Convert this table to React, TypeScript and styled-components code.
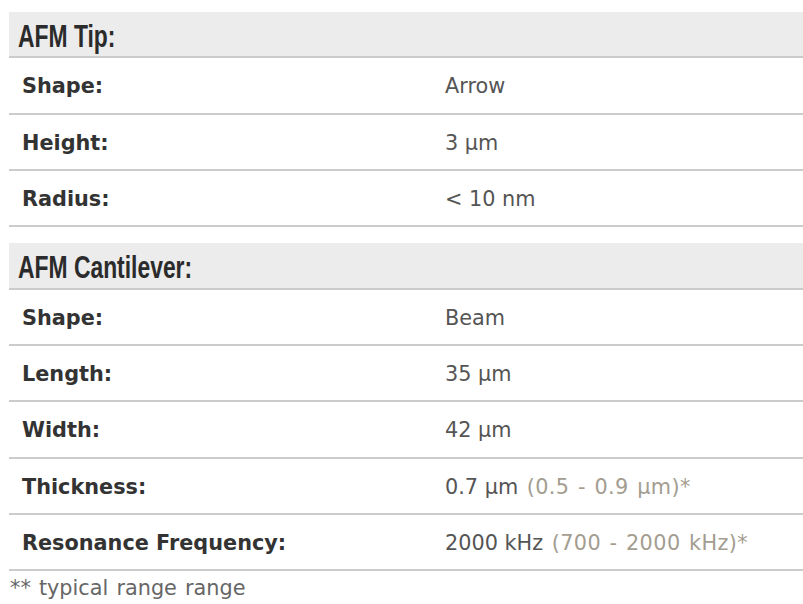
import React from "react";
import styled, { createGlobalStyle } from "styled-components";

const Global = createGlobalStyle`
  html, body { margin: 0; padding: 0; background: #fff; }
  body { font-family: "DejaVu Sans", Verdana, sans-serif; }
`;

const Page = styled.div`
  padding: 12px 0 0 9px;
  width: 794px;
`;

const Section = styled.section<{ $last?: boolean }>`
  margin-bottom: ${(p) => (p.$last ? "0" : "16px")};
`;

const SectionTitle = styled.h2`
  margin: 0;
  height: 46.3px;
  box-sizing: border-box;
  display: flex;
  align-items: center;
  padding: 3px 0 0 9px;
  background: #ececec;
  border-bottom: 2px solid #cccccc;
  font-family: "Liberation Sans", Arial, sans-serif;
  font-weight: 700;
  font-size: 30.5px;
  line-height: 34px;
  color: #2b2b2b;
  overflow: hidden;
`;

const TitleText = styled.span`
  display: inline-block;
  transform: scaleX(0.75);
  transform-origin: left center;
  white-space: nowrap;
`;

const Row = styled.div`
  display: grid;
  grid-template-columns: 423px 1fr;
  border-bottom: 2px solid #cccccc;
`;

const Label = styled.div`
  padding: 14px 13px 12px;
  line-height: 28.33px;
  font-size: 20.8px;
  font-weight: 700;
  color: #333333;
`;

const Value = styled.div`
  padding: 14px 13px 12px;
  line-height: 28.33px;
  font-size: 20.8px;
  color: #555555;
`;

const Range = styled.span`
  color: #a39d90;
  word-spacing: 1.5px;
  letter-spacing: 0.4px;
`;

const Footnote = styled.div`
  padding: 3px 0 0 1px;
  font-size: 20.8px;
  line-height: 28px;
  color: #666666;
  word-spacing: 1.5px;
`;

type Item = { label: string; value: string; range?: string };

const tip: Item[] = [
  { label: "Shape:", value: "Arrow" },
  { label: "Height:", value: "3 µm" },
  { label: "Radius:", value: "< 10 nm" },
];

const cantilever: Item[] = [
  { label: "Shape:", value: "Beam" },
  { label: "Length:", value: "35 µm" },
  { label: "Width:", value: "42 µm" },
  { label: "Thickness:", value: "0.7 µm", range: "(0.5 - 0.9 µm)*" },
  { label: "Resonance Frequency:", value: "2000 kHz", range: "(700 - 2000 kHz)*" },
];

const SpecSection = ({ title, items, last }: { title: string; items: Item[]; last?: boolean }) => (
  <Section $last={last}>
    <SectionTitle>
      <TitleText>{title}</TitleText>
    </SectionTitle>
    {items.map((it) => (
      <Row key={it.label}>
        <Label>{it.label}</Label>
        <Value>
          {it.value}
          {it.range ? <Range> {it.range}</Range> : null}
        </Value>
      </Row>
    ))}
  </Section>
);

export default function App() {
  return (
    <>
      <Global />
      <Page>
        <SpecSection title="AFM Tip:" items={tip} />
        <SpecSection title="AFM Cantilever:" items={cantilever} last />
        <Footnote>** typical range range</Footnote>
      </Page>
    </>
  );
}
